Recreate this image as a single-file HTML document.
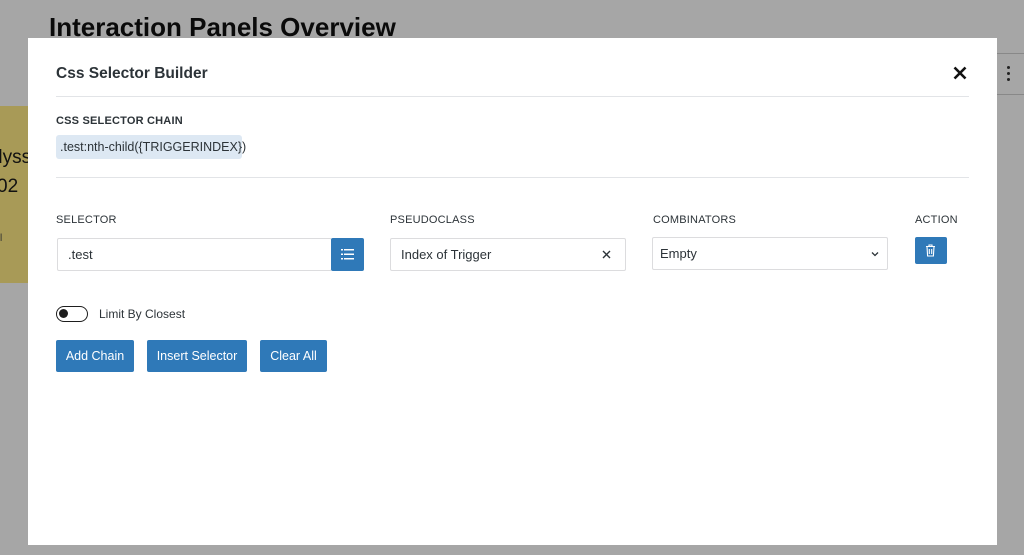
<!DOCTYPE html>
<html><head><meta charset="utf-8"><style>
*{box-sizing:border-box;margin:0;padding:0}
body{width:1024px;height:555px;background:#a6a6a6;font-family:"Liberation Sans",sans-serif;position:relative;overflow:hidden;color:#1e1e1e}
.h1{position:absolute;left:49px;top:12px;font-size:26px;font-weight:bold;color:#0a0a0a}
.yel{position:absolute;left:0;top:106px;width:28px;height:177px;background:#a89a57}
.yt{position:absolute;font-size:19px;color:#111;white-space:nowrap}
.rt{position:absolute;left:997px;top:53px;width:27px;height:42px;border-top:1px solid #888;border-bottom:1px solid #888;background:#a6a6a6}
.modal{position:absolute;left:28px;top:38px;width:969px;height:507px;background:#fff}
.abs{position:absolute}
.lbl{font-size:11px;font-weight:bold;color:#2c3338;letter-spacing:.2px}
.lbl2{font-size:11px;color:#2c3338;letter-spacing:.2px}
.inp{position:absolute;height:33px;border:1px solid #dcdcde;border-radius:2px;font-size:13px;color:#2c3338;padding-left:10px;line-height:31px}
.btn{position:absolute;height:32px;background:#2f79b8;color:#fff;font-size:12.5px;line-height:32px;text-align:center;border-radius:2px;white-space:nowrap}
.hr{position:absolute;left:28px;width:913px;height:1px;background:#e2e4e7}
</style></head><body>
<div class="h1">Interaction Panels Overview</div>
<div class="yel"></div>
<div class="yt" style="left:-8px;top:147px">dyss</div>
<div class="yt" style="left:-3px;top:176px">02</div>
<div class="abs" style="left:0;top:233px;font-size:10px;color:#333">l</div>
<div class="rt"><div style="position:absolute;left:10px;top:12px;width:3px;height:3px;background:#222;border-radius:50%;box-shadow:0 6px 0 #222,0 12px 0 #222"></div></div>
<div class="modal">
 <div class="abs" style="left:28px;top:27px;font-size:15.5px;font-weight:bold;color:#2c3338">Css Selector Builder</div>
 <svg class="abs" style="left:925px;top:28px" width="14" height="14" viewBox="0 0 14 14"><path d="M1.5 1.5L12.5 12.5M12.5 1.5L1.5 12.5" stroke="#111" stroke-width="2.6"/></svg>
 <div class="hr" style="top:58px"></div>
 <div class="abs lbl" style="left:28px;top:77px">CSS SELECTOR CHAIN</div>
 <div class="abs" style="left:28px;top:97px;height:24px;width:186px;background:#dde8f3;border-radius:3px;font-size:12.5px;color:#2c3338;line-height:24px;padding-left:4px;white-space:nowrap">.test:nth-child({TRIGGERINDEX})</div>
 <div class="hr" style="top:139px"></div>
 <div class="abs lbl2" style="left:28px;top:176px">SELECTOR</div>
 <div class="abs lbl2" style="left:362px;top:176px">PSEUDOCLASS</div>
 <div class="abs lbl2" style="left:625px;top:176px">COMBINATORS</div>
 <div class="abs lbl2" style="left:887px;top:176px">ACTION</div>
 <div class="inp" style="left:29px;top:200px;width:275px">.test</div>
 <div class="abs" style="left:303px;top:200px;width:33px;height:33px;background:#2f79b8;border-radius:2px">
  <svg style="position:absolute;left:10px;top:11px" width="13" height="11" viewBox="0 0 13 11"><g fill="#fff"><rect x="0" y="0" width="2" height="1.5"/><rect x="3" y="0" width="10" height="1.5"/><rect x="0" y="4.5" width="2" height="1.5"/><rect x="3" y="4.5" width="10" height="1.5"/><rect x="0" y="9" width="2" height="1.5"/><rect x="3" y="9" width="10" height="1.5"/></g></svg>
 </div>
 <div class="inp" style="left:362px;top:200px;width:236px">Index of Trigger</div>
 <svg class="abs" style="left:574px;top:212px" width="9" height="9" viewBox="0 0 9 9"><path d="M1 1L8 8M8 1L1 8" stroke="#2c3338" stroke-width="1.4"/></svg>
 <div class="inp" style="left:624px;top:199px;width:236px;padding-left:7px">Empty</div>
 <svg class="abs" style="left:843px;top:213px" width="8" height="6" viewBox="0 0 8 6"><path d="M1 1.5L4 4.5L7 1.5" stroke="#2c3338" stroke-width="1.3" fill="none"/></svg>
 <div class="abs" style="left:887px;top:199px;width:32px;height:27px;background:#2f79b8;border-radius:2px">
  <svg style="position:absolute;left:10px;top:7px" width="11" height="13" viewBox="0 0 11 13"><path d="M1 2.5H10M4 2.5V1H7V2.5M2 2.5L2.6 12H8.4L9 2.5M4.3 5V10M6.7 5V10" stroke="#fff" stroke-width="1.1" fill="none"/></svg>
 </div>
 <div class="abs" style="left:28px;top:268px;width:32px;height:16px;border:1.5px solid #1e1e1e;border-radius:8px"><div style="position:absolute;left:2px;top:2px;width:9px;height:9px;background:#1e1e1e;border-radius:50%"></div></div>
 <div class="abs" style="left:71px;top:269px;font-size:12px;color:#2c3338">Limit By Closest</div>
 <div class="btn" style="left:28px;top:302px;width:78px">Add Chain</div>
 <div class="btn" style="left:119px;top:302px;width:100px">Insert Selector</div>
 <div class="btn" style="left:232px;top:302px;width:67px">Clear All</div>
</div>
</body></html>
